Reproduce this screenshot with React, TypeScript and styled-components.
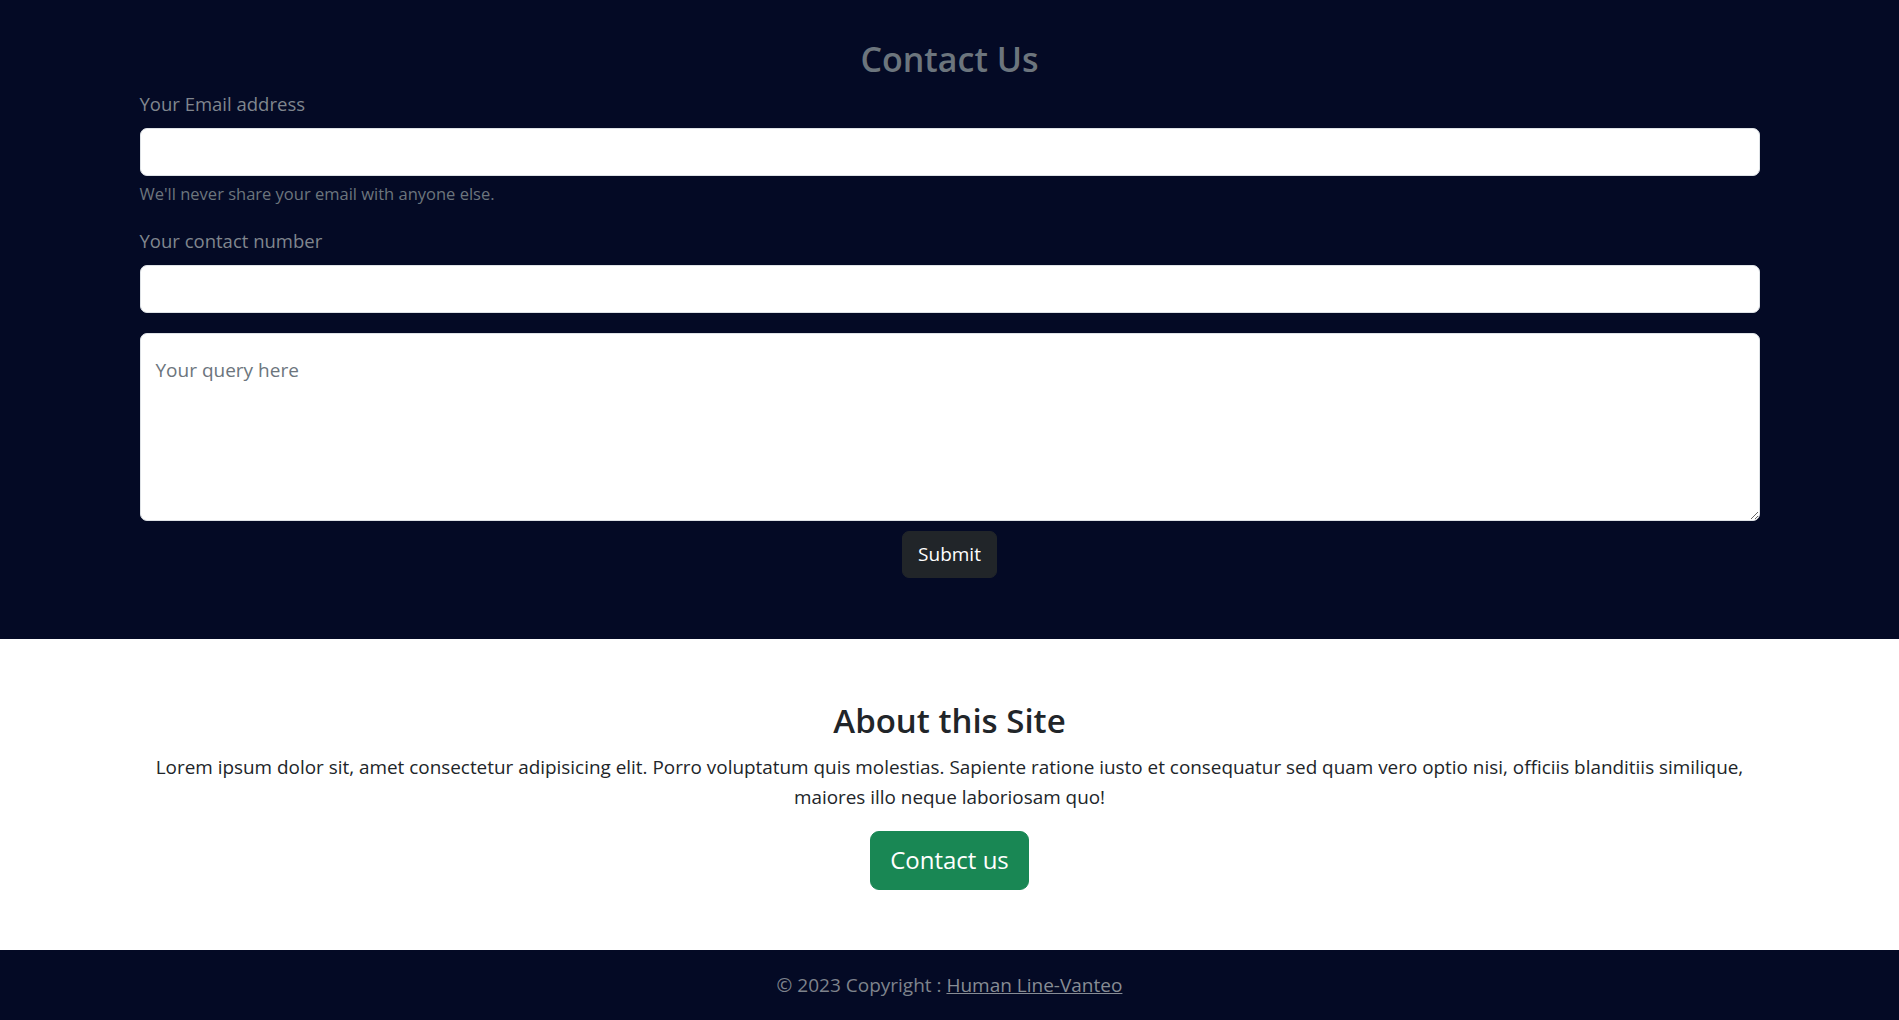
import styled, { createGlobalStyle } from "styled-components"

const GlobalStyle = createGlobalStyle`
  * { box-sizing: border-box; }
  body {
    margin: 0;
    font-family: "Open Sans", "Noto Sans", sans-serif;
    font-size: 20px;
    line-height: 1.5;
    color: #212529;
    background: #fff;
  }
`

const App = () => {
  return (
    <>
      <GlobalStyle />
      <ContactSection>
        <Container>
          <Title>Contact Us</Title>
          <Field>
            <Label htmlFor="email">Your Email address</Label>
            <Input id="email" type="email" />
            <Help>We'll never share your email with anyone else.</Help>
          </Field>
          <Field>
            <Label htmlFor="phone">Your contact number</Label>
            <Input id="phone" type="text" />
          </Field>
          <Query placeholder="Your query here" />
          <Center>
            <SubmitButton type="button">Submit</SubmitButton>
          </Center>
        </Container>
      </ContactSection>

      <AboutSection>
        <Container>
          <AboutTitle>About this Site</AboutTitle>
          <AboutText>
            Lorem ipsum dolor sit, amet consectetur adipisicing elit. Porro voluptatum quis molestias. Sapiente ratione iusto et consequatur sed quam vero optio nisi, officiis blanditiis similique, maiores illo neque laboriosam quo!
          </AboutText>
          <GreenButton type="button">Contact us</GreenButton>
        </Container>
      </AboutSection>

      <Footer>
        © 2023 Copyright : <FooterLink href="#">Human Line-Vanteo</FooterLink>
      </Footer>
    </>
  )
}

export default App

const ContactSection = styled.section`
  background: #040a25;
  padding: 35px 0 61px;
`

const Container = styled.div`
  width: 1620px;
  margin: 0 auto;
`

const Title = styled.h2`
  margin: 0 0 7px;
  text-align: center;
  font-size: 34px;
  font-weight: 600;
  line-height: 48px;
  color: #6c757d;
`

const Field = styled.div`
  margin-bottom: 20px;
`

const Label = styled.label`
  display: block;
  margin-bottom: 10px;
  color: #80868e;
  font-size: 18.5px;
`

const Input = styled.input`
  display: block;
  width: 100%;
  height: 48px;
  padding: 7px 15px;
  font: inherit;
  border: 1px solid #dee2e6;
  border-radius: 7px;
  background: #fff;
  outline: none;
`

const Help = styled.div`
  margin-top: 5px;
  font-size: 16.5px;
  line-height: 26px;
  color: #6c757d;
`

const Query = styled.textarea`
  display: block;
  width: 100%;
  height: 188px;
  padding: 22px 15px 9px;
  font: inherit;
  font-size: 19px;
  border: 1px solid #dee2e6;
  border-radius: 7px;
  background: #fff;
  outline: none;
  &::placeholder { color: #6c757d; }
`

const Center = styled.div`
  display: flex;
  justify-content: center;
  margin-top: 10px;
`

const SubmitButton = styled.button`
  height: 47px;
  padding: 0 15px;
  font: inherit;
  font-size: 19px;
  color: #fff;
  background: #212529;
  border: 1px solid #212529;
  border-radius: 7px;
`

const AboutSection = styled.section`
  background: #fff;
  padding: 58px 0 60px;
  text-align: center;
`

const AboutTitle = styled.h2`
  margin: 0 0 7px;
  font-size: 33px;
  font-weight: 600;
  line-height: 48px;
  color: #212529;
`

const AboutText = styled.p`
  margin: 0 0 19px;
  font-size: 18.9px;
  line-height: 30px;
  padding: 0 12px;
`

const GreenButton = styled.button`
  height: 59px;
  padding: 0 19px;
  font: inherit;
  font-size: 24px;
  color: #fff;
  background: #198754;
  border: 1px solid #198754;
  border-radius: 9px;
`

const Footer = styled.footer`
  background: #040a25;
  padding: 20px 0 21px;
  text-align: center;
  color: #7e838c;
  font-size: 19px;
  line-height: 30px;
`

const FooterLink = styled.a`
  color: #878c94;
  text-decoration: underline;
`
